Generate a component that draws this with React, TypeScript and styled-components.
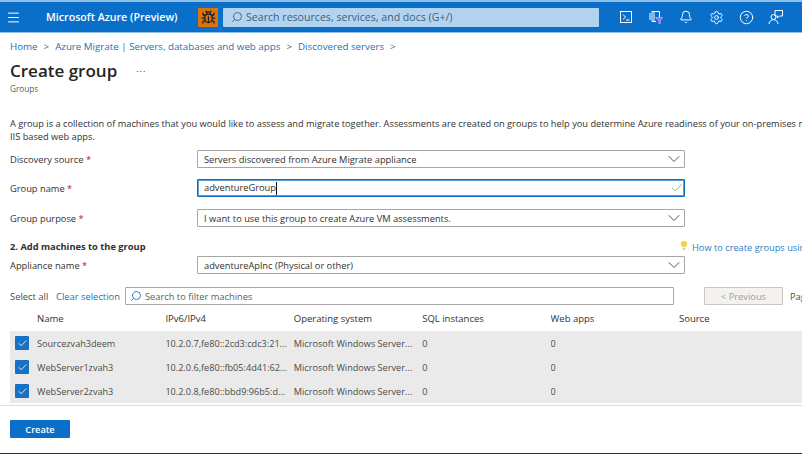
import React, { FC } from 'react'
import styled, { createGlobalStyle } from 'styled-components'
import { Bell, Bug, Check, ChevronDown, CircleHelp, Menu, Search, Settings } from 'lucide-react'

const GlobalStyle = createGlobalStyle`
  html, body {
    margin: 0;
    padding: 0;
    background: #fff;
  }
  * {
    box-sizing: border-box;
  }
`

const PAGE = styled.div`
  width: 802px;
  height: 454px;
  overflow: hidden;
  display: flex;
  flex-direction: column;
  font-family: 'Open Sans', 'Noto Sans', 'Liberation Sans', sans-serif;
  font-size: 9.3px;
  color: #323130;
  background: #fff;
  border-bottom: 1px solid #2b3038;
`

const TOP_BAR = styled.header`
  flex: none;
  height: 33px;
  display: flex;
  align-items: center;
  background: #0a6fc9;
  border-top: 2px solid #8fc0e8;
  border-bottom: 1px solid #8fc0e8;
  color: #fff;
`

const MENU_BUTTON = styled.div`
  width: 46px;
  padding-left: 6px;
  display: flex;
`

const BRAND = styled.div`
  width: 152px;
  font-size: 10.65px;
  font-weight: 600;
  white-space: nowrap;
`

const BUG_BUTTON = styled.div`
  width: 20px;
  height: 19px;
  margin-right: 5px;
  background: #d9730d;
  color: #222;
  display: flex;
  align-items: center;
  justify-content: center;
`

const TOP_SEARCH = styled.div`
  width: 376px;
  height: 19px;
  padding-left: 8px;
  display: flex;
  align-items: center;
  gap: 3px;
  background: #b3d4f0;
  color: #3f5f7c;
  font-size: 10.6px;
  white-space: nowrap;
  border-radius: 1px;

  svg {
    flex: none;
    transform: scaleX(-1);
  }
`

const TOP_ICONS = styled.div`
  margin-left: 12px;
  display: flex;
  align-items: center;
`

const TOP_ICON = styled.div`
  width: 30px;
  height: 24px;
  display: flex;
  align-items: center;
  justify-content: center;
`

const CONTENT = styled.main`
  flex: 1;
  padding: 6px 0 0 10px;
  display: flex;
  flex-direction: column;
  min-height: 0;
`

const CRUMBS = styled.nav`
  flex: none;
  height: 14px;
  display: flex;
  align-items: center;
  gap: 6px;
  color: #1f6fb8;
  font-size: 9.75px;
  white-space: nowrap;

  i {
    font-style: normal;
    color: #605e5c;
  }
`

const TITLE_ROW = styled.div`
  flex: none;
  margin-top: 8px;
  height: 20px;
  display: flex;
  align-items: center;
  gap: 19px;
`

const TITLE = styled.h1`
  margin: 0;
  font-size: 17px;
  font-weight: 600;
  color: #252423;
  line-height: 20px;
`

const MORE = styled.span`
  font-size: 9px;
  line-height: 12px;
  letter-spacing: 1px;
  margin-top: -4px;
  color: #323130;
`

const SUBTITLE = styled.div`
  flex: none;
  margin-top: 2px;
  height: 12px;
  font-size: 8.2px;
  color: #605e5c;
`

const INTRO = styled.p`
  flex: none;
  margin: 22px 0 0;
  font-size: 9.25px;
  line-height: 13px;
  white-space: nowrap;
`

const FORM = styled.div`
  flex: none;
  margin-top: 7px;
  display: flex;
  flex-direction: column;
`

const FIELD = styled.div<{ $gap: number }>`
  margin-bottom: ${({ $gap }) => $gap}px;
  display: flex;
  align-items: center;
`

const LABEL = styled.label`
  width: 187px;

  b {
    color: #a4262c;
    font-weight: 400;
  }
`

const INPUT = styled.div<{ $focused?: boolean }>`
  width: 488px;
  height: 18px;
  padding: 0 4px 0 6px;
  display: flex;
  align-items: center;
  justify-content: space-between;
  background: #fff;
  border: 1px solid ${({ $focused }) => ($focused ? '#0f6cbd' : '#a8a6a4')};
  box-shadow: ${({ $focused }) => ($focused ? 'inset 0 0 0 1px #5a9fd8' : 'none')};
  border-radius: 1px;
  white-space: nowrap;
`

const CARET = styled.span`
  display: inline-block;
  width: 1px;
  height: 13px;
  background: #111;
  vertical-align: middle;
`

const VALID_MARK = styled(Check)`
  flex: none;
  margin-right: -4px;
`

const SELECT_CHEVRON = styled(ChevronDown)`
  flex: none;
  margin-right: -4px;
`

const SECTION_ROW = styled.div`
  height: 16px;
  margin-top: 11px;
  margin-bottom: 2px;
  display: flex;
  align-items: center;
  justify-content: space-between;
  white-space: nowrap;
`

const SECTION_TITLE = styled.h2`
  margin: 0;
  font-size: 9.3px;
  font-weight: 700;
  color: #323130;
`

const HINT = styled.a`
  width: 122px;
  flex: none;
  display: flex;
  align-items: center;
  gap: 4px;
  overflow: hidden;
  color: #2a7fc4;
  font-size: 9.25px;
  margin-top: 3px;

  svg {
    flex: none;
    margin-top: -5px;
  }
`

const FILTER_ROW = styled.div`
  flex: none;
  margin-top: 13px;
  height: 18px;
  display: flex;
  align-items: center;
  white-space: nowrap;
`

const SELECT_ALL = styled.span`
  width: 46px;
  flex: none;
  font-size: 9.4px;
  color: #4c4a48;
`

const CLEAR = styled.a`
  width: 69px;
  flex: none;
  color: #1f6fb8;
  font-size: 9.4px;
`

const FILTER_INPUT = styled.div`
  width: 549px;
  height: 18px;
  flex: none;
  padding-left: 4px;
  display: flex;
  align-items: center;
  gap: 3px;
  border: 1px solid #a8a6a4;
  border-radius: 1px;
  color: #605e5c;

  svg {
    flex: none;
    transform: scaleX(-1);
    color: #2a6fb0;
  }
`

const PREVIOUS = styled.button`
  margin-left: 30px;
  width: 79px;
  height: 18px;
  flex: none;
  padding: 0;
  border: 1px solid #c8c6c4;
  border-radius: 1px;
  background: #f3f2f1;
  color: #a19f9d;
  font: inherit;
`

const PAGE_LABEL = styled.span`
  margin-left: 7px;
  color: #4c4a48;
`

const TABLE = styled.div`
  flex: none;
  padding-bottom: 2px;
  border-bottom: 1px solid #e1dfdd;
  margin-left: -10px;
  padding-left: 10px;
`

const TABLE_ROW = styled.div<{ $head?: boolean }>`
  height: ${({ $head }) => ($head ? 26 : 24)}px;
  display: grid;
  grid-template-columns: 27px repeat(6, 128.4px);
  align-items: center;
  background: ${({ $head }) => ($head ? 'transparent' : '#eaeaea')};
  color: ${({ $head }) => ($head ? '#323130' : '#4c4a48')};
  font-size: ${({ $head }) => ($head ? 9.5 : 9.15)}px;
  white-space: nowrap;
`

const CELL = styled.div`
  overflow: hidden;
`

const CHECK_BOX = styled.span`
  width: 14px;
  height: 14px;
  margin-left: 5px;
  display: flex;
  align-items: center;
  justify-content: center;
  background: #1572c4;
  border-radius: 1px;
  color: #fff;
`

const FOOTER = styled.div`
  flex: none;
  margin-top: 14px;
`

const CREATE_BUTTON = styled.button`
  width: 60px;
  height: 18px;
  padding: 0;
  border: none;
  border-radius: 1px;
  background: #0a6fc9;
  color: #fff;
  font: inherit;
  font-size: 9.2px;
  font-weight: 600;
`

const CloudShellIcon: FC = () => (
  <svg width="14" height="14" viewBox="0 0 14 14" fill="none" stroke="#fff" strokeWidth="1">
    <rect x="1.5" y="1.5" width="11" height="11" />
    <path d="M4 4.500 6.500 7 4 9.500M7 10h3.500" />
  </svg>
)

const DirectoryIcon: FC = () => (
  <svg width="14" height="16" viewBox="0 0 14 16" fill="none">
    <path d="M3 2.500h7.500v6M3 2.500v10h4M1 4v7M5 2.500v10" stroke="#fff" strokeWidth="1" />
    <path d="M6.500 8.500h7L11.200 12v3l-1.400-.8V12z" fill="#a06ad0" stroke="#e6d6f5" strokeWidth=".5" />
  </svg>
)

const FeedbackIcon: FC = () => (
  <svg width="16" height="16" viewBox="0 0 16 16" fill="none" stroke="#fff" strokeWidth="1">
    <path d="M7 1.500h7.500V7h-3l-2 2V7H7z" />
    <circle cx="5.500" cy="8" r="2.500" />
    <path d="M1 15c.3-2.800 2-4.300 4.500-4.300S9.700 12.200 10 15" />
  </svg>
)

const BulbIcon: FC = () => (
  <svg width="8" height="11" viewBox="0 0 9 12">
    <path d="M4.500.5a3.600 3.600 0 0 1 2 6.600V8h-4v-.9a3.600 3.600 0 0 1 2-6.600z" fill="#f7d448" />
    <path d="M3 9h3v1H3zM3.700 10.500h1.600v1H3.700z" fill="#b9b4a6" />
  </svg>
)

const machines = [
  { name: 'Sourcezvah3deem', ip: '10.2.0.7,fe80::2cd3:cdc3:21...' },
  { name: 'WebServer1zvah3', ip: '10.2.0.6,fe80::fb05:4d41:62...' },
  { name: 'WebServer2zvah3', ip: '10.2.0.8,fe80::bbd9:96b5:d...' }
]

const App: FC = () => (
  <PAGE>
    <GlobalStyle />
    <TOP_BAR>
      <MENU_BUTTON>
        <Menu size={15} strokeWidth={1.6} />
      </MENU_BUTTON>
      <BRAND>Microsoft Azure (Preview)</BRAND>
      <BUG_BUTTON>
        <Bug size={15} strokeWidth={2} />
      </BUG_BUTTON>
      <TOP_SEARCH>
        <Search size={12} strokeWidth={1.8} />
        Search resources, services, and docs (G+/)
      </TOP_SEARCH>
      <TOP_ICONS>
        <TOP_ICON>
          <CloudShellIcon />
        </TOP_ICON>
        <TOP_ICON>
          <DirectoryIcon />
        </TOP_ICON>
        <TOP_ICON>
          <Bell size={14} strokeWidth={1.7} />
        </TOP_ICON>
        <TOP_ICON>
          <Settings size={15} strokeWidth={1.6} />
        </TOP_ICON>
        <TOP_ICON>
          <CircleHelp size={15} strokeWidth={1.6} />
        </TOP_ICON>
        <TOP_ICON>
          <FeedbackIcon />
        </TOP_ICON>
      </TOP_ICONS>
    </TOP_BAR>
    <CONTENT>
      <CRUMBS>
        <span>Home</span>
        <i>&gt;</i>
        <span>Azure Migrate | Servers, databases and web apps</span>
        <i>&gt;</i>
        <span>Discovered servers</span>
        <i>&gt;</i>
      </CRUMBS>
      <TITLE_ROW>
        <TITLE>Create group</TITLE>
        <MORE>...</MORE>
      </TITLE_ROW>
      <SUBTITLE>Groups</SUBTITLE>
      <INTRO>
        A group is a collection of machines that you would like to assess and migrate together. Assessments are created on groups to help you determine Azure readiness of your on-premises machines and
        <br />
        IIS based web apps.
      </INTRO>
      <FORM>
        <FIELD $gap={11}>
          <LABEL>
            Discovery source <b>*</b>
          </LABEL>
          <INPUT>
            Servers discovered from Azure Migrate appliance
            <SELECT_CHEVRON size={20} strokeWidth={1} />
          </INPUT>
        </FIELD>
        <FIELD $gap={12}>
          <LABEL>
            Group name <b>*</b>
          </LABEL>
          <INPUT $focused>
            <span>
              adventureGroup
              <CARET />
            </span>
            <VALID_MARK size={14} strokeWidth={1.3} color="#6aa84f" />
          </INPUT>
        </FIELD>
        <FIELD $gap={0}>
          <LABEL>
            Group purpose <b>*</b>
          </LABEL>
          <INPUT>
            I want to use this group to create Azure VM assessments.
            <SELECT_CHEVRON size={20} strokeWidth={1} />
          </INPUT>
        </FIELD>
        <SECTION_ROW>
          <SECTION_TITLE>2. Add machines to the group</SECTION_TITLE>
          <HINT>
            <BulbIcon />
            How to create groups using
          </HINT>
        </SECTION_ROW>
        <FIELD $gap={0}>
          <LABEL>
            Appliance name <b>*</b>
          </LABEL>
          <INPUT>
            adventureAplnc (Physical or other)
            <SELECT_CHEVRON size={20} strokeWidth={1} />
          </INPUT>
        </FIELD>
      </FORM>
      <FILTER_ROW>
        <SELECT_ALL>Select all</SELECT_ALL>
        <CLEAR>Clear selection</CLEAR>
        <FILTER_INPUT>
          <Search size={12} strokeWidth={1.8} />
          Search to filter machines
        </FILTER_INPUT>
        <PREVIOUS>&lt; Previous</PREVIOUS>
        <PAGE_LABEL>Page</PAGE_LABEL>
      </FILTER_ROW>
      <TABLE>
        <TABLE_ROW $head>
          <CELL />
          <CELL>Name</CELL>
          <CELL>IPv6/IPv4</CELL>
          <CELL>Operating system</CELL>
          <CELL>SQL instances</CELL>
          <CELL>Web apps</CELL>
          <CELL>Source</CELL>
        </TABLE_ROW>
        {machines.map((machine) => (
          <TABLE_ROW key={machine.name}>
            <CHECK_BOX>
              <Check size={11} strokeWidth={1.8} />
            </CHECK_BOX>
            <CELL>{machine.name}</CELL>
            <CELL>{machine.ip}</CELL>
            <CELL>Microsoft Windows Server...</CELL>
            <CELL>0</CELL>
            <CELL>0</CELL>
            <CELL />
          </TABLE_ROW>
        ))}
      </TABLE>
      <FOOTER>
        <CREATE_BUTTON>Create</CREATE_BUTTON>
      </FOOTER>
    </CONTENT>
  </PAGE>
)

export default App
